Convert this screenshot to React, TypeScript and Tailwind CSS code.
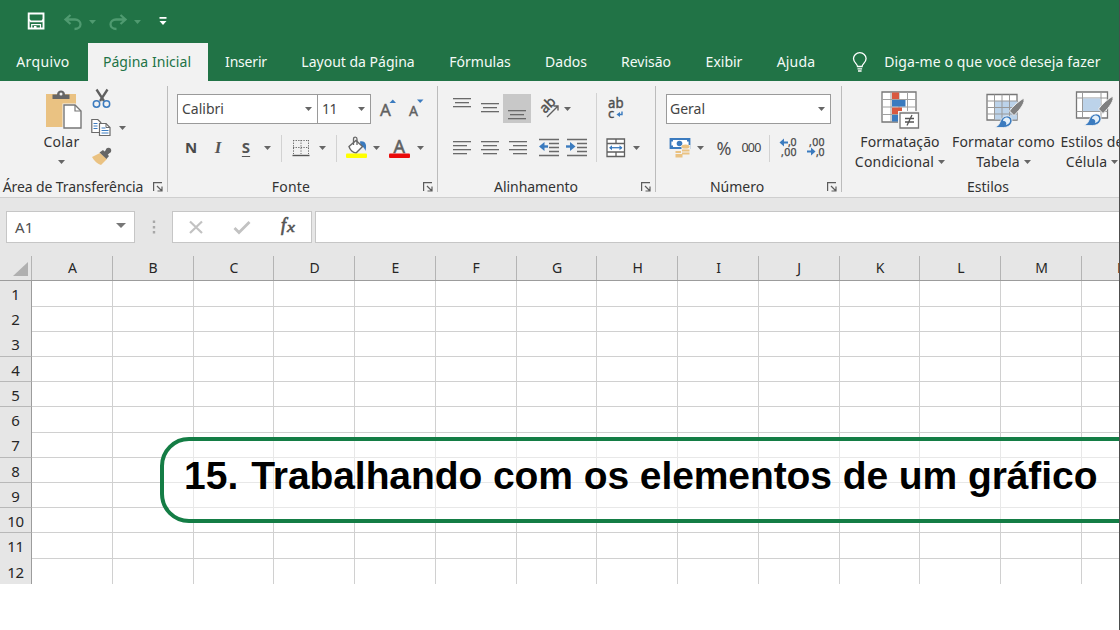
import type { ReactNode } from 'react';

const INK = '#666666';
const BLUE = '#3b7bbf';

function Caret({ className = '', color = INK }: { className?: string; color?: string }) {
  return (
    <svg className={`shrink-0 ${className}`} width="7" height="4" viewBox="0 0 7 4">
      <path d="M0 0h7L3.5 4z" fill={color} />
    </svg>
  );
}

function Label({ className = '', children }: { className?: string; children: ReactNode }) {
  return <span className={`flex shrink-0 justify-center whitespace-nowrap leading-5 ${className}`}>{children}</span>;
}

function Icon({ w, h, className = '', children }: { w: number; h: number; className?: string; children: ReactNode }) {
  return (
    <svg className={`shrink-0 overflow-visible ${className}`} width={w} height={h} viewBox={`0 0 ${w} ${h}`} fill="none">
      {children}
    </svg>
  );
}

function Launcher() {
  return (
    <Icon w={10} h={10} className="mr-[4px]">
      <path d="M.6 9V.6H9M4 4l4.500 4.500M9 4.500V9H4.500" stroke="#5c5c5c" strokeWidth="1.200" />
    </Icon>
  );
}

function Group({ width, title, titleClass, launcher = true, children }: {
  width: string; title: string; titleClass: string; launcher?: boolean; children: ReactNode;
}) {
  return (
    <section className={`flex h-full shrink-0 flex-col ${width}`}>
      <div className="h-[96px]">{children}</div>
      <div className="flex h-[20px] items-center justify-between">
        <Label className={titleClass}>{title}</Label>
        {launcher && <Launcher />}
      </div>
    </section>
  );
}

function Sep() {
  return <div className="mt-[5px] h-[106px] w-px shrink-0 bg-[#bcbcbc]" />;
}

function ShortSep({ className }: { className: string }) {
  return <div className={`h-[27px] w-px shrink-0 bg-[#d2d2d2] ${className}`} />;
}

function Lines({ rows, className = '' }: { rows: [number, number, number][]; className?: string }) {
  return (
    <Icon w={18} h={28} className={className}>
      {rows.map(([x, y, w]) => (
        <rect key={y} x={x} y={y} width={w} height="1.3" fill="#6a6a6a" />
      ))}
    </Icon>
  );
}

function Brush() {
  return (
    <>
      <path d="M38 9c-5 3-11 8-14.500 13l4.500 4.500c4-4 9-9.500 10-14z" fill="#808080" stroke="#f2f2f2" strokeWidth="1" />
      <path d="M8.500 38.500c5-1.500 5-5 7-8.500 3-4.500 10-4 10.500 1 .5 4-3.500 7.500-8.500 7.500z" fill={BLUE} stroke="#f2f2f2" strokeWidth=".8" />
      <path d="M17.500 30c2-2.500 6-2 6.500 1 .5 2.500-1.500 4.500-4 5 1-2-.5-4.500-3-4z" fill="#e4f0fa" />
    </>
  );
}

const tabs: [string, string][] = [
  ['Inserir', 'ml-[16px] w-[44px] tracking-[-0.2px]'],
  ['Layout da Página', 'ml-[30px] w-[120px]'],
  ['Fórmulas', 'ml-[29px] w-[66px]'],
  ['Dados', 'ml-[30px] w-[46px]'],
  ['Revisão', 'ml-[29px] w-[56px]'],
  ['Exibir', 'ml-[29px] w-[42px]'],
  ['Ajuda', 'ml-[28px] w-[46px] tracking-[0.2px]'],
];

function TitleBar() {
  return (
    <div className="flex h-[43px] items-center bg-[#217346]">
      <Icon w={18} h={18} className="ml-[27px] mt-[-1px]">
        <path d="M1.700 1.500h14.800v15H1.700z" stroke="#fff" strokeWidth="1.900" />
        <path d="M2 7.500l1.500 1.800h11.500l1.500-1.800" stroke="#fff" strokeWidth="1.700" />
        <path d="M4.700 16.500v-3.800h8.800v3.800" stroke="#fff" strokeWidth="1.200" />
        <path d="M7 14h2.500v3H7z" fill="#fff" />
      </Icon>
      <Icon w={18} h={18} className="ml-[19px]">
        <path d="M6.500 2L1.500 6.500l5 4.500M2 6.500h9c3 0 5.500 2 5.500 4.800S14 16 10.500 16" stroke="#4f9a70" strokeWidth="2.300" />
      </Icon>
      <Caret className="ml-[7px]" color="#4f9a70" />
      <Icon w={18} h={18} className="ml-[13px]">
        <path d="M11.500 2l5 4.500-5 4.500M16 6.500H7C4 6.500 1.500 8.500 1.500 11.300S4 16 7.500 16" stroke="#4f9a70" strokeWidth="2.300" />
      </Icon>
      <Caret className="ml-[7px]" color="#4f9a70" />
      <Icon w={8} h={9} className="ml-[18px]">
        <path d="M.5 0h7v1.700h-7zM.5 4h7L4 8z" fill="#fff" />
      </Icon>
    </div>
  );
}

function TabBar() {
  return (
    <nav className="flex h-[38px] items-center bg-[#217346] pb-px text-[14px] text-[#f4faf6]">
      <Label className="ml-[15px] w-[56px] tracking-[0.350px]">Arquivo</Label>
      <div className="mb-[-1px] ml-[17px] flex h-[38px] w-[120px] shrink-0 items-center justify-center bg-[#f2f2f2] pr-[2px] text-[#217346]">
        <Label className="tracking-[0.050px]">Página Inicial</Label>
      </div>
      {tabs.map(([name, cls]) => (
        <Label key={name} className={cls}>{name}</Label>
      ))}
      <Icon w={16} h={20} className="ml-[33px]">
        <path d="M5.500 14.500c0-2.800-4-3.800-4-8a6.300 5.800 0 0 1 12.600 0c0 4.200-4 5.200-4 8zM5.500 16.800h4.600M6 19h3.600" stroke="#fff" strokeWidth="1.300" />
      </Icon>
      <Label className="ml-[16px] w-[217px] tracking-[0.100px]">Diga-me o que você deseja fazer</Label>
    </nav>
  );
}

function Clipboard() {
  return (
    <Group width="w-[167px]" title="Área de Transferência" titleClass="ml-[3px] w-[140px] tracking-[-0.1px]">
      <div className="flex">
        <div className="ml-[36px] flex w-[50px] flex-col items-center pt-[9px]">
          <Icon w={38} h={40} className="ml-[5px]">
            <path d="M1 4h30v33H1z" fill="#eac282" />
            <path d="M7.500 9V4.500H12c0-5.500 8-5.500 8 0h4.500V9z" fill="#666" />
            <circle cx="16" cy="4" r="1.500" fill="#f2f2f2" />
            <path d="M17.500 13.500h13l7.500 7.500v18H17.500z" fill="#f2f2f2" />
            <path d="M19 15h11l6 6V38H19z" fill="#fff" stroke="#777" strokeWidth="1.400" />
            <path d="M30 15v6h6" stroke="#777" strokeWidth="1.200" />
          </Icon>
          <Label className="mt-[2px] ml-px tracking-[0.300px]">Colar</Label>
          <Caret className="mt-[8px]" />
        </div>
        <div className="ml-[5px] flex flex-col pt-[7px]">
          <Icon w={22} h={22}>
            <path d="M5.500 1.500l7.500 11.500M16.500 1.500L9 13" stroke="#5f5f5f" strokeWidth="2.300" />
            <circle cx="5.500" cy="16" r="3.200" stroke={BLUE} strokeWidth="1.500" />
            <circle cx="15.500" cy="16" r="3.200" stroke={BLUE} strokeWidth="1.500" />
          </Icon>
          <div className="mt-[8px] flex items-center">
            <Icon w={22} h={20}>
              <path d="M.8 1.500h6l3 3v10h-9z" fill="#fff" stroke="#6a6a6a" strokeWidth="1.200" />
              <path d="M2.500 5.500h4M2.500 8h4M2.500 10.500h4" stroke={BLUE} />
              <path d="M8.500 5.500h6.500l4 4v8H8.500z" fill="#fff" stroke="#6a6a6a" strokeWidth="1.200" />
              <path d="M15 5.500v4h4" stroke="#6a6a6a" />
              <path d="M10.500 10h4M10.500 12.500h7M10.500 15h7" stroke={BLUE} />
            </Icon>
            <Caret className="ml-[6px]" />
          </div>
          <Icon w={22} h={20} className="ml-[1px] mt-[8px]">
            <path d="M0 11l8-4 7 6-6 6c-3-1-7-4-9-8z" fill="#eac282" />
            <path d="M7.500 6.500L11 4l6 6-2.500 3z" fill="#666" />
            <circle cx="16.500" cy="4.500" r="2.700" fill="#666" />
            <path d="M12 6l3-3 3 3.500-3 3z" fill="#666" />
          </Icon>
        </div>
      </div>
    </Group>
  );
}

function FontGroup() {
  return (
    <Group width="w-[269px]" title="Fonte" titleClass="ml-[103px] w-[40px] tracking-[0.200px]">
      <div className="mt-[13px] flex h-[30px] items-center">
        <div className="ml-[9px] flex h-[30px] w-[141px] items-center justify-between border border-[#9a9a9a] bg-white pl-[4px] pr-[5px]">
          <Label className="text-[#444]">Calibri</Label><Caret />
        </div>
        <div className="ml-[-1px] flex h-[30px] w-[54px] items-center justify-between border border-[#9a9a9a] bg-white pl-[4px] pr-[5px]">
          <Label className="tracking-[-0.6px] text-[#444]">11</Label><Caret />
        </div>
        <Icon w={18} h={24} className="ml-[9px]">
          <text x="0" y="18.500" fontSize="17" fill="#606060" stroke="#606060" strokeWidth=".4">A</text>
          <path d="M9.500 6h6.500l-3.200-3.500z" fill={BLUE} />
        </Icon>
        <Icon w={18} h={24} className="ml-[11px]">
          <text x="0" y="18.500" fontSize="14" fill="#606060" stroke="#606060" strokeWidth=".4">A</text>
          <path d="M8 2.500h6.500L11.200 6z" fill={BLUE} />
        </Icon>
      </div>
      <div className="mt-[10px] flex h-[28px] items-center">
        <Label className="mb-[2px] ml-[15px] w-[16px] text-[15px] font-bold text-[#4a4a4a]">N</Label>
        <Label className="mb-[1px] ml-[11px] w-[16px] font-['Liberation_Serif',serif] text-[17px] font-bold italic text-[#555]">I</Label>
        <Label className="mb-[3px] ml-[13px] w-[14px] text-[15px] font-bold text-[#555] underline underline-offset-[3px]">S</Label>
        <Caret className="ml-[11px]" />
        <ShortSep className="ml-[10px]" />
        <Icon w={18} h={18} className="ml-[10px]">
          <path d="M1 1.500h16M1 8.500h16M1.500 1v14M9 1v14M16.500 1v14" stroke="#6a6a6a" strokeDasharray="1.300 1.300" />
          <path d="M.5 16.500h17" stroke="#555" strokeWidth="1.400" />
        </Icon>
        <Caret className="ml-[9px]" />
        <ShortSep className="ml-[10px]" />
        <Icon w={22} h={24} className="ml-[9px]">
          <path d="M14 5.500c6-1 7 4 5.500 9.500-1-3-2.500-4.500-5-5z" fill={BLUE} />
          <path d="M3 10.500l7-6 6.500 6-6.500 6.500c-3 0-6-3-7-6.500z" fill="#fff" stroke="#686868" strokeWidth="1.400" />
          <path d="M7.500 9V3c0-2.500 3.500-2.500 3.500 0v6" stroke="#686868" strokeWidth="1.300" />
          <rect x="0" y="17.500" width="21" height="4.500" rx="1" fill="#ff0" />
        </Icon>
        <Caret className="ml-[5px]" />
        <Icon w={22} h={24} className="ml-[9px]">
          <text x="4.500" y="16.500" fontSize="18" fill="#606060" stroke="#606060" strokeWidth=".5">A</text>
          <rect x="0" y="17.500" width="21" height="4.500" rx="1" fill="#ea0b0b" />
        </Icon>
        <Caret className="ml-[6px]" />
      </div>
    </Group>
  );
}

function IndentIcon({ flip, className }: { flip?: boolean; className: string }) {
  return (
    <Icon w={22} h={28} className={className}>
      <path d="M1 5.500h20M11 9.500h10M11 13.500h10M11 17.500h10M1 21.500h20" stroke="#6a6a6a" strokeWidth="1.300" />
      <path d={flip ? 'M0 12.500h6' : 'M3 12.500h7'} stroke={BLUE} strokeWidth="2.400" />
      <path d={flip ? 'M4 8l5.500 4.500L4 17z' : 'M6.500 8L1 12.500 6.500 17z'} fill={BLUE} />
    </Icon>
  );
}

function Alignment() {
  return (
    <Group width="w-[217px]" title="Alinhamento" titleClass="ml-[56px] w-[84px] tracking-[-0.050px]">
      <div className="flex">
        <div className="w-[158px]">
          <div className="mt-[13px] flex h-[29px] items-center">
            <Lines className="ml-[15px]" rows={[[0, 3, 18], [2, 7, 14], [0, 11, 18]]} />
            <Lines className="ml-[10px]" rows={[[0, 8, 18], [2, 12, 14], [0, 16, 18]]} />
            <div className="ml-[4px] flex h-[29px] w-[28px] items-center justify-center bg-[#c8c8c8]">
              <Lines rows={[[0, 15, 18], [2, 19, 14], [0, 23, 18]]} />
            </div>
            <Icon w={22} h={24} className="ml-[7px]">
              <text transform="translate(7 17) rotate(-45)" fontSize="14" fill="#4f4f4f" stroke="#4f4f4f" strokeWidth=".4">ab</text>
              <path d="M9 20L20 9M15.500 9H20v4.500" stroke="#606060" strokeWidth="1.400" />
            </Icon>
            <Caret className="ml-[4px]" />
          </div>
          <div className="mt-[11px] flex h-[28px] items-center">
            <Lines className="ml-[15px]" rows={[[0, 7, 18], [0, 11, 14], [0, 15, 18], [0, 19, 14]]} />
            <Lines className="ml-[10px]" rows={[[0, 7, 18], [2, 11, 14], [0, 15, 18], [2, 19, 14]]} />
            <Lines className="ml-[10px]" rows={[[0, 7, 18], [4, 11, 14], [0, 15, 18], [4, 19, 14]]} />
            <IndentIcon className="ml-[11px]" />
            <IndentIcon flip className="ml-[6px]" />
          </div>
        </div>
        <div className="mt-[12px] h-[69px] w-px bg-[#d2d2d2]" />
        <div>
          <div className="mt-[13px] flex h-[29px] items-center">
            <Icon w={20} h={24} className="ml-[11px]">
              <text x="0" y="11" fontSize="14" textLength="15.500" lengthAdjust="spacingAndGlyphs" fill="#4f4f4f" stroke="#4f4f4f" strokeWidth=".4">ab</text>
              <text x="0" y="20.500" fontSize="13" fill="#4f4f4f" stroke="#4f4f4f" strokeWidth=".4">c</text>
              <path d="M14 14.500v3h-3" stroke={BLUE} strokeWidth="1.400" />
              <path d="M12 15L8.500 17.500 12 20z" fill={BLUE} />
            </Icon>
          </div>
          <div className="mt-[11px] flex h-[28px] items-center">
            <Icon w={20} h={20} className="ml-[9px]">
              <path d="M1 1h17.500v17.500H1zM1 5.500h17.500M1 14h17.500M10 1v4.500M10 14v4.500" fill="#fff" stroke="#606060" strokeWidth="1.300" />
              <path d="M4 9.700h12" stroke={BLUE} strokeWidth="1.300" />
              <path d="M6 7.200L3 9.700l3 2.500zM13.500 7.200l3 2.500-3 2.500z" fill={BLUE} />
            </Icon>
            <Caret className="ml-[7px]" />
          </div>
        </div>
      </div>
    </Group>
  );
}

function NumberGroup() {
  return (
    <Group width="w-[185px]" title="Número" titleClass="ml-[55px] w-[52px]">
      <div className="ml-[10px] mt-[13px] flex h-[30px] w-[165px] items-center justify-between border border-[#9a9a9a] bg-white pl-[3px] pr-[5px]">
        <Label className="text-[#444]">Geral</Label><Caret />
      </div>
      <div className="mt-[10px] flex h-[28px] items-center">
        <Icon w={24} h={24} className="ml-[13px]">
          <path d="M1.500 3h19v9h-19z" fill="#fff" stroke={BLUE} strokeWidth="1.800" />
          <circle cx="10.500" cy="7.500" r="2.800" fill={BLUE} />
          <path d="M1 2.500h3v3H1zM18 2.500h3v3h-3zM1 9.500h3v3H1z" fill={BLUE} />
          <path d="M12.500 9h9v12h-9zM6 14h8v9H6z" fill="#f2f2f2" />
          <ellipse cx="16.500" cy="10.500" rx="4" ry="2" fill="#eac282" />
          <path d="M13 13.500h7.500v2H13zM13 16.500h7.500v2H13zM6.500 15h5.500v2H6.500zM6.500 18h7v3.500h-7z" fill="#eac282" />
        </Icon>
        <Caret className="ml-[4px]" />
        <Label className="ml-[11px] w-[18px] text-[18px] text-[#505050]">%</Label>
        <Label className="mb-px ml-[8px] w-[20px] text-[12.500px] tracking-[-0.8px] text-[#444]">000</Label>
        <ShortSep className="ml-[8px]" />
        <Icon w={20} h={24} className="ml-[9px]">
          <path d="M3 6.500h6" stroke={BLUE} strokeWidth="2" />
          <path d="M5 2.500l-4.500 4 4.500 4z" fill={BLUE} />
          <text x="9" y="10" fontSize="10.500" textLength="8.500" fill="#484848" stroke="#484848" strokeWidth=".25">,0</text>
          <text x="2" y="19.500" fontSize="10.500" textLength="15.500" fill="#484848" stroke="#484848" strokeWidth=".25">,00</text>
        </Icon>
        <Icon w={20} h={24} className="ml-[8px]">
          <path d="M0 15.500h6" stroke={BLUE} strokeWidth="2" />
          <path d="M4 11.500l4.500 4-4.500 4z" fill={BLUE} />
          <text x="2" y="10" fontSize="10.500" textLength="15.500" fill="#484848" stroke="#484848" strokeWidth=".25">,00</text>
          <text x="9" y="19.500" fontSize="10.500" textLength="8.500" fill="#484848" stroke="#484848" strokeWidth=".25">,0</text>
        </Icon>
      </div>
    </Group>
  );
}

function BigButton({ className, icon, first, second }: { className: string; icon: ReactNode; first: string; second: string }) {
  return (
    <div className={`flex shrink-0 flex-col items-center pt-[8px] ${className}`}>
      {icon}
      <Label className="mt-[3px] tracking-[0.100px]">{first}</Label>
      <div className="flex items-center gap-[4px]">
        <Label className="tracking-[0.200px]">{second}</Label><Caret />
      </div>
    </div>
  );
}

function Styles() {
  return (
    <Group width="w-[278px]" title="Estilos" titleClass="ml-[125px] w-[42px]" launcher={false}>
      <div className="flex">
        <BigButton className="ml-[8px] w-[100px]" first="Formatação" second="Condicional" icon={
          <Icon w={40} h={40}>
            <path d="M2 3h34v30H2z" fill="#fff" stroke="#777" strokeWidth="1.300" />
            <path d="M2 10.500h34M2 18h34M2 25.500h34M11 3v30M19 3v30M27.500 3v30" stroke="#a0a0a0" />
            <path d="M12 3.500h7v6.500h-7zM12 18.500h10v6.500H12z" fill="#d9593f" />
            <path d="M12 11h13.500v6.500H12zM12 26h6.500v6.500H12z" fill={BLUE} />
            <path d="M18 22h22v18H18z" fill="#f2f2f2" />
            <path d="M20 24h18.500v15H20z" fill="#fff" stroke="#777" strokeWidth="1.300" />
            <path d="M25 29.500h9M25 33h9M32 26l-5 10.500" stroke="#555" strokeWidth="1.300" />
          </Icon>} />
        <BigButton className="ml-px w-[105px]" first="Formatar como" second="Tabela" icon={
          <Icon w={40} h={40} className="ml-[4px]">
            <path d="M1 5.500h30V31H1z" fill="#fff" stroke="#777" strokeWidth="1.300" />
            <path d="M8.500 12h22.500V30.500H8.500z" fill="#bcd3ea" />
            <path d="M1 12h30M1 18.500h30M1 25h30M8.500 5.500v26M16 5.500v26M23.500 5.500v26" stroke="#999" />
            <Brush />
          </Icon>} />
        <BigButton className="w-[72px]" first="Estilos de" second="Célula" icon={
          <Icon w={40} h={40} className="ml-[5px]">
            <path d="M1.500 3h31v26h-31z" fill="#fff" stroke="#777" strokeWidth="1.300" />
            <path d="M1.500 9h31M1.500 22.500h31M7.500 3v26M26 3v26" stroke="#999" />
            <path d="M8 9.500h17.500v12.500H8z" fill="#bcd3ea" />
            <g transform="translate(0 -2)"><Brush /></g>
          </Icon>} />
      </div>
    </Group>
  );
}

function FormulaBar() {
  return (
    <div className="flex h-[58px] bg-[#e6e6e6] pl-[6px] pt-[13px]">
      <div className="flex h-[32px] w-[129px] shrink-0 items-center justify-between border border-[#c6c6c6] bg-white pl-[8px] pr-[8px]">
        <Label className="text-[15px] tracking-[0.200px] text-[#505050]">A1</Label>
        <svg className="mb-[3px]" width="10" height="5" viewBox="0 0 10 5"><path d="M0 0h10L5 5z" fill="#777" /></svg>
      </div>
      <Icon w={4} h={32} className="ml-[17px]">
        <path d="M.8 9.500h2.400v2.400H.8zM.8 15h2.400v2.400H.8zM.8 20h2.400v2.400H.8z" fill="#a8a8a8" />
      </Icon>
      <div className="ml-[16px] flex h-[32px] w-[140px] shrink-0 items-center border border-[#c6c6c6] bg-white">
        <Icon w={14} h={14} className="ml-[16px]">
          <path d="M1 1.500l12 11.500M13 1.500L1 13" stroke="#c2c2c2" strokeWidth="2.200" />
        </Icon>
        <Icon w={18} h={16} className="ml-[30px]">
          <path d="M1.500 9l4.500 4.500L16.500 3" stroke="#c2c2c2" strokeWidth="2.800" />
        </Icon>
        <Icon w={20} h={22} className="ml-[28px]">
          <text x="2" y="15" fontSize="18" fontStyle="italic" className="font-['Liberation_Serif',serif]" fill="#555" stroke="#555" strokeWidth=".7">f</text>
          <text x="8" y="16" fontSize="14" fontStyle="italic" textLength="8" lengthAdjust="spacingAndGlyphs" className="font-['Liberation_Serif',serif]" fill="#555" stroke="#555" strokeWidth=".5">x</text>
        </Icon>
      </div>
      <div className="ml-[3px] h-[32px] flex-1 border border-r-0 border-[#c6c6c6] bg-white" />
    </div>
  );
}

function Sheet() {
  return (
    <div className="relative w-full overflow-hidden text-[15px] text-[#262626]">
      <div className="grid h-[25px] w-[1163px] grid-cols-[32px_repeat(14,80.77px)] border-b border-[#9c9c9c] bg-[#e6e6e6]">
        <div className="flex items-end justify-end border-r border-[#b4b4b4] pb-[4px] pr-[3px]">
          <svg width="15" height="14" viewBox="0 0 15 14"><path d="M15 0v14H0z" fill="#b0b0b0" /></svg>
        </div>
        {'ABCDEFGHIJKLMN'.split('').map((c) => (
          <div key={c} className="flex items-center justify-center border-r border-[#b4b4b4] pb-px pl-px text-[14px]">{c}</div>
        ))}
      </div>
      {Array.from({ length: 12 }, (_, r) => (
        <div key={r} className="grid h-[25.230px] w-[1163px] grid-cols-[32px_repeat(14,80.77px)]">
          <div className={`flex items-center justify-center border-r border-r-[#9c9c9c] bg-[#e6e6e6] pt-[2px] tracking-[-0.3px] ${r === 11 ? '' : 'border-b border-b-[#b8b8b8]'}`}>{r + 1}</div>
          {Array.from({ length: 14 }, (_, c) => (
            <div key={c} className={r === 11 ? 'border-r border-[#d0d0d0]' : 'border-b border-r border-[#d0d0d0]'} />
          ))}
        </div>
      ))}
      <div className="absolute left-[160px] top-[181px] flex h-[86px] w-[1000px] items-center rounded-[29px] border-[4px] border-[#147d45] bg-white/50 pb-[8px] pl-[20px] font-['Liberation_Sans',sans-serif] text-[39px] font-bold text-black">
        <span className="whitespace-nowrap">15.</span>
        <span className="ml-[13px] whitespace-nowrap tracking-[-0.080px]">Trabalhando com os elementos de um gráfico</span>
      </div>
    </div>
  );
}

export default function App() {
  return (
    <main className="h-[630px] w-[1120px] overflow-hidden border-r border-[#4d4d4d] bg-white font-['Noto_Sans',sans-serif]">
      <TitleBar />
      <TabBar />
      <div className="flex h-[117px] overflow-hidden border-b border-[#cfcfcf] bg-[#f2f2f2] text-[14px] text-[#333]">
        <Clipboard />
        <Sep />
        <FontGroup />
        <Sep />
        <Alignment />
        <Sep />
        <NumberGroup />
        <Sep />
        <Styles />
      </div>
      <FormulaBar />
      <Sheet />
    </main>
  );
}
